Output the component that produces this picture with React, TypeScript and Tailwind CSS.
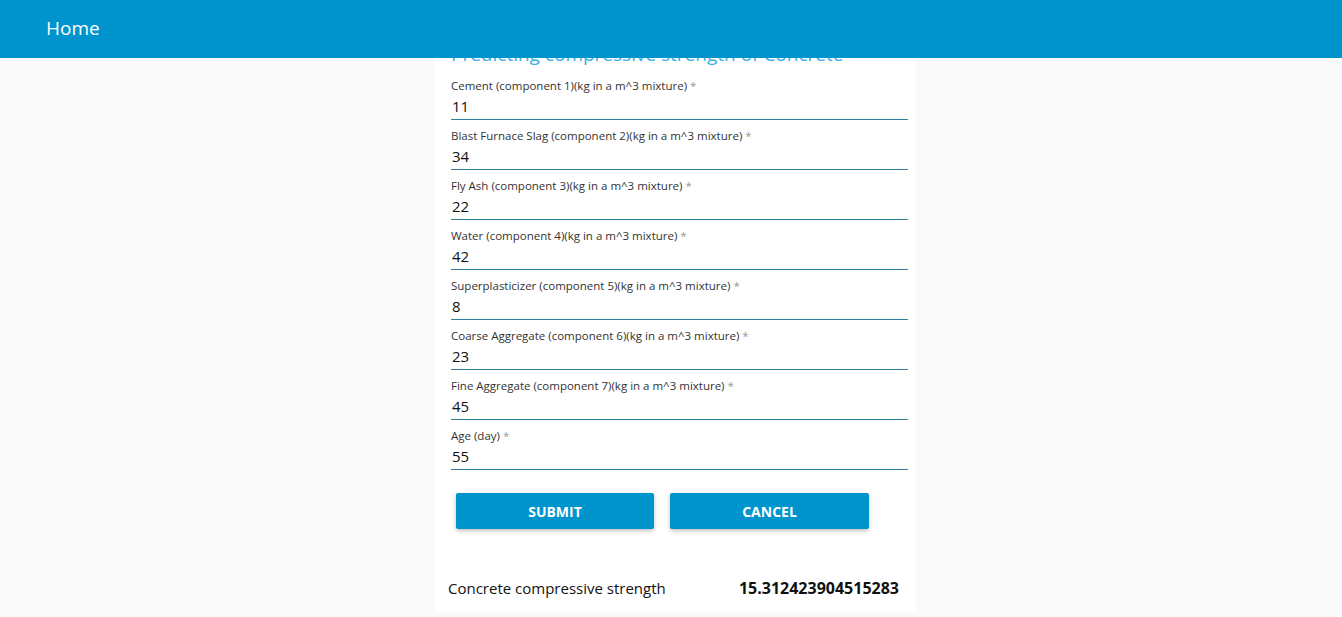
const fields = [
  { label: "Cement (component 1)(kg in a m^3 mixture)", value: "11" },
  { label: "Blast Furnace Slag (component 2)(kg in a m^3 mixture)", value: "34" },
  { label: "Fly Ash (component 3)(kg in a m^3 mixture)", value: "22" },
  { label: "Water (component 4)(kg in a m^3 mixture)", value: "42" },
  { label: "Superplasticizer (component 5)(kg in a m^3 mixture)", value: "8" },
  { label: "Coarse Aggregate (component 6)(kg in a m^3 mixture)", value: "23" },
  { label: "Fine Aggregate (component 7)(kg in a m^3 mixture)", value: "45" },
  { label: "Age (day)", value: "55" },
];

const font = { fontFamily: '"Open Sans", "Noto Sans", sans-serif' };

export default function App() {
  return (
    <div className="min-h-[617px] bg-[#fafafa] text-[#111]" style={font}>
      <header className="fixed top-0 left-0 right-0 z-10 flex h-[58px] items-center bg-[#0094cd] px-[46px]">
        <span className="-mt-[2px] text-[19px] text-white">Home</span>
      </header>

      <main className="flex justify-center pl-[9px]">
        <div className="w-[481px] bg-white pt-[43px] pb-[12px] pl-[16px] pr-[8px]">
          <h1 className="text-[19px] leading-[22px] text-[#3aaee6]">
            Predicting compressive strength of Concrete
          </h1>

          <form className="mt-[5px] flex flex-col">
            {fields.map((f) => (
              <div key={f.label} className="flex h-[50px] flex-col justify-end">
                <label className="text-[11.5px] leading-[14px] text-[#333]">
                  {f.label} <span className="text-[#999]">*</span>
                </label>
                <div className="mt-[3px] border-b border-[#2f7f9f] pb-[3px] text-[15px] leading-[20px] pl-[1px]">
                  {f.value}
                </div>
              </div>
            ))}

            <div className="mt-[23px] flex gap-[16px] pl-[5px]">
              <button
                type="button"
                className="h-[36px] w-[198px] rounded-[2px] bg-[#0094cd] text-[14px] font-bold text-white shadow-[0_2px_4px_rgba(0,0,0,0.25)]"
              >
                SUBMIT
              </button>
              <button
                type="button"
                className="h-[36px] w-[199px] rounded-[2px] bg-[#0094cd] text-[14px] font-bold text-white shadow-[0_2px_4px_rgba(0,0,0,0.25)]"
              >
                CANCEL
              </button>
            </div>
          </form>

          <div className="mt-[47px] flex items-center justify-between pr-[9px]">
            <span className="-ml-[3px] text-[15px]">Concrete compressive strength</span>
            <span className="text-[16px] font-bold">15.312423904515283</span>
          </div>
        </div>
      </main>
    </div>
  );
}
